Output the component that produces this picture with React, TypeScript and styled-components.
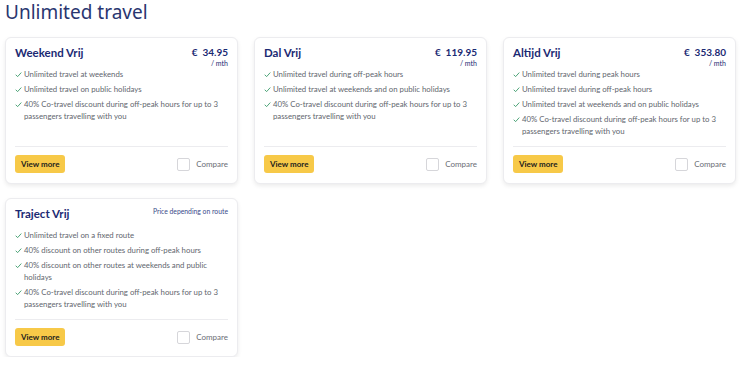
import styled, { createGlobalStyle } from "styled-components";

const GlobalStyle = createGlobalStyle`
  body {
    margin: 0;
    background: #ffffff;
    font-family: "Lato", "Noto Sans", sans-serif;
  }
`;

const Page = styled.div`
  padding: 0 4px 0 5px;
`;

const Heading = styled.h1`
  margin: 0;
  font-family: "Noto Sans", sans-serif;
  font-size: 19px;
  line-height: 24px;
  font-weight: 400;
  color: #2a3670;
`;

const CardGrid = styled.div`
  display: grid;
  grid-template-columns: repeat(3, 233px);
  column-gap: 16px;
  row-gap: 14px;
  margin-top: 13px;
`;

const Card = styled.div`
  display: flex;
  flex-direction: column;
  border: 1px solid #ececef;
  border-radius: 6px;
  box-shadow: 0 2px 4px rgba(0, 0, 0, 0.08);
  padding: 7px 9px 10px 9px;
  background: #fff;
`;

const CardHeader = styled.div`
  display: flex;
  justify-content: space-between;
  align-items: flex-start;
  min-height: 23px;
`;

const CardTitle = styled.div`
  font-size: 11.5px;
  line-height: 15px;
  font-weight: 700;
  color: #1b2a73;
`;

const PriceBox = styled.div`
  text-align: right;
  color: #1b2a73;
`;

const Price = styled.div`
  font-size: 10px;
  font-weight: 700;
  line-height: 14px;
  white-space: pre;
`;

const PerMonth = styled.div`
  font-size: 7px;
  line-height: 9px;
`;

const RouteNote = styled.div`
  font-size: 6.8px;
  line-height: 10px;
  color: #3a4a8a;
`;

const FeatureList = styled.ul`
  list-style: none;
  margin: 0;
  padding: 0;
  display: flex;
  flex-direction: column;
  gap: 3px;
  flex: 1;
`;

const Feature = styled.li`
  display: flex;
  gap: 2px;
  font-size: 7.8px;
  line-height: 12px;
  color: #62666e;
`;

const Check = styled.svg`
  flex: none;
  width: 7px;
  height: 7px;
  margin-top: 3px;
`;

const Footer = styled.div`
  display: flex;
  justify-content: space-between;
  align-items: center;
  border-top: 1px solid #ececef;
  margin-top: 9px;
  padding-top: 8px;
`;

const ViewButton = styled.button`
  background: #f7c948;
  border: none;
  border-radius: 3px;
  height: 18px;
  padding: 0 6px;
  font-family: inherit;
  font-size: 8px;
  font-weight: 700;
  color: #1d1d1d;
  cursor: pointer;
`;

const CompareLabel = styled.label`
  display: flex;
  align-items: center;
  gap: 6px;
  font-size: 8px;
  color: #6a6d75;
`;

const Box = styled.span`
  width: 11px;
  height: 11px;
  border: 1px solid #d6d6da;
  border-radius: 2px;
  background: #fff;
`;

type Plan = {
  name: string;
  price?: string;
  features: string[];
};

const plans: Plan[] = [
  {
    name: "Weekend Vrij",
    price: "€  34.95",
    features: [
      "Unlimited travel at weekends",
      "Unlimited travel on public holidays",
      "40% Co-travel discount during off-peak hours for up to 3 passengers travelling with you",
    ],
  },
  {
    name: "Dal Vrij",
    price: "€  119.95",
    features: [
      "Unlimited travel during off-peak hours",
      "Unlimited travel at weekends and on public holidays",
      "40% Co-travel discount during off-peak hours for up to 3 passengers travelling with you",
    ],
  },
  {
    name: "Altijd Vrij",
    price: "€  353.80",
    features: [
      "Unlimited travel during peak hours",
      "Unlimited travel during off-peak hours",
      "Unlimited travel at weekends and on public holidays",
      "40% Co-travel discount during off-peak hours for up to 3 passengers travelling with you",
    ],
  },
  {
    name: "Traject Vrij",
    features: [
      "Unlimited travel on a fixed route",
      "40% discount on other routes during off-peak hours",
      "40% discount on other routes at weekends and public holidays",
      "40% Co-travel discount during off-peak hours for up to 3 passengers travelling with you",
    ],
  },
];

const CheckIcon = () => (
  <Check viewBox="0 0 10 10">
    <path d="M1 5.4 L3.8 8 L9 2.2" fill="none" stroke="#3c9a6a" strokeWidth="1.3" />
  </Check>
);

const App = () => (
  <>
    <GlobalStyle />
    <Page>
      <Heading>Unlimited travel</Heading>
      <CardGrid>
        {plans.map((plan) => (
          <Card key={plan.name}>
            <CardHeader>
              <CardTitle>{plan.name}</CardTitle>
              {plan.price ? (
                <PriceBox>
                  <Price>{plan.price}</Price>
                  <PerMonth>/ mth</PerMonth>
                </PriceBox>
              ) : (
                <RouteNote>Price depending on route</RouteNote>
              )}
            </CardHeader>
            <FeatureList>
              {plan.features.map((f) => (
                <Feature key={f}>
                  <CheckIcon />
                  <span>{f}</span>
                </Feature>
              ))}
            </FeatureList>
            <Footer>
              <ViewButton>View more</ViewButton>
              <CompareLabel>
                <Box />
                Compare
              </CompareLabel>
            </Footer>
          </Card>
        ))}
      </CardGrid>
    </Page>
  </>
);

export default App;
